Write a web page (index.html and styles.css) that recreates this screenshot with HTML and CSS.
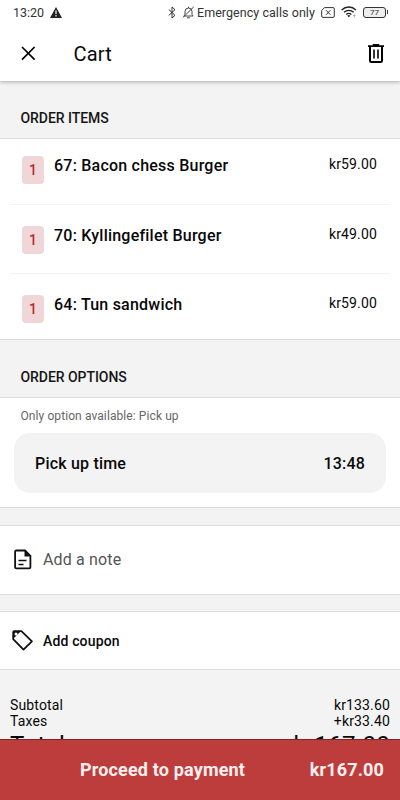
FILE: index.html
```html
<!DOCTYPE html>
<html lang="en">
<head>
<meta charset="utf-8">
<title>Cart</title>
<link rel="stylesheet" href="styles.css">
</head>
<body>
<div class="status">
  <span class="clock">13:20</span>
  <svg class="warn" width="12" height="11" viewBox="0 0 12 11"><path d="M6 0 12 11H0Z" fill="#222"/><path d="M6 3.5v3.6M6 8v1.4" stroke="#fff" stroke-width="1.2"/></svg>
  <svg class="bt" width="8" height="13" viewBox="0 0 8 13"><path d="M.8 3.6 7 9.3 4 12V1l3 2.7L.8 9.4" fill="none" stroke="#333"/></svg>
  <svg class="bell" width="13" height="13" viewBox="0 0 13 13" fill="none" stroke="#444"><path d="M2 10h9L10 8.500V5.500a3.500 3.500 0 0 0-7 0v3zM5 11.800h3M6.500 2V.8M.8 11.500 11.800.8"/></svg>
  <span class="carrier">Emergency calls only</span>
  <svg class="sim" width="14" height="11" viewBox="0 0 14 11" fill="none" stroke="#333"><path d="M3.500.6H12a1.300 1.300 0 0 1 1.300 1.300v7.200a1.300 1.300 0 0 1-1.300 1.300H2A1.300 1.300 0 0 1 .7 9.100V3.500zM5 3.200l4.400 4.600M9.400 3.200 5 7.800"/></svg>
  <svg class="wifi" width="16" height="12" viewBox="0 0 16 12" fill="none" stroke="#222" stroke-width="1.400"><path d="M.7 3.900a10.300 10.300 0 0 1 14.200 0M3 6.300a7 7 0 0 1 9.600 0M5.200 8.500a4 4 0 0 1 5.200 0"/><path d="m7.800 11.300-1.500-1.500a2.200 2.200 0 0 1 3 0z" fill="#222" stroke="none"/><path d="M12.200 9.500h2.200M13.300 8.400v3" stroke="#999" stroke-width=".8"/></svg>
  <span class="battery">77</span><span class="nub"></span>
</div>
<header class="bar">
  <svg class="close" width="15" height="15" viewBox="0 0 15 15"><path d="m1 1 12.600 12.600M13.600 1 1 13.600" stroke="#000" stroke-width="1.700"/></svg>
  <h1>Cart</h1>
  <svg class="trash" width="18" height="19" viewBox="0 0 18 19" fill="none" stroke="#000"><path d="M1 2.200h16M5.800 1h6.400" stroke-width="1.800"/><path d="M3 2.500v14.200q0 1.200 1.200 1.200h9.600q1.200 0 1.200-1.200V2.500" stroke-width="2"/><path d="M7 5.600v8.800M11 5.600v8.800" stroke-width="1.600"/></svg>
</header>
<main>
  <h2 class="items-title">ORDER ITEMS</h2>
  <section class="items">
    <div class="item"><span class="qty">1</span><span class="name">67: Bacon chess Burger</span><span class="price">kr59.00</span></div>
    <div class="item"><span class="qty">1</span><span class="name">70: Kyllingefilet Burger</span><span class="price">kr49.00</span></div>
    <div class="item"><span class="qty">1</span><span class="name">64: Tun sandwich</span><span class="price">kr59.00</span></div>
  </section>
  <h2 class="options-title">ORDER OPTIONS</h2>
  <section class="options">
    <p>Only option available: Pick up</p>
    <div class="pickup"><span>Pick up time</span><span class="time">13:48</span></div>
  </section>
  <section class="note">
    <svg width="18" height="21" viewBox="0 0 18 21"><path d="M2.300 1.500H11l5.400 5.400v11.300q0 1.200-1.200 1.200H2.300q-1.200 0-1.200-1.200V2.700q0-1.200 1.200-1.200z" fill="none" stroke="#111" stroke-width="1.800"/><path d="M10.500 1v6.400H17z" fill="#111"/><path d="M4.500 11.500h8M4.500 15.400h5" stroke="#111" stroke-width="1.500"/></svg>
    <span>Add a note</span>
  </section>
  <section class="coupon">
    <svg width="21" height="21" viewBox="0 0 21 21"><path d="M1.200 2.200v6.900l10.300 10.500 8.400-8.300L9.400 1.200H2.200q-1 0-1 1z" fill="none" stroke="#111" stroke-width="1.800" stroke-linejoin="round"/><path d="M1 1h8L1 9z" fill="#111"/><circle cx="4" cy="4" r="1.500" fill="#fff"/></svg>
    <span>Add coupon</span>
  </section>
  <section class="totals">
    <div><span>Subtotal</span><span>kr133.60</span></div>
    <div><span>Taxes</span><span>+kr33.40</span></div>
    <div class="total"><span>Total</span><span>kr167.00</span></div>
  </section>
</main>
<footer><span class="pay">Proceed to payment</span><span class="sum">kr167.00</span></footer>
</body>
</html>
```
FILE: styles.css
```css
* { box-sizing: border-box; margin: 0; padding: 0; }
body { width: 400px; height: 800px; overflow: hidden; display: flex; flex-direction: column; background: #f3f3f3; color: #080808; font-family: Roboto, "Liberation Sans", sans-serif; }
svg { display: block; flex: none; }
span, h1, h2, p { white-space: nowrap; }
.status { position: relative; z-index: 2; flex: none; height: 26px; padding: 0 0 2px 13px; display: flex; align-items: center; background: #fff; color: #333; }
.status span { flex: none; }
.clock { font-size: 12.500px; width: 37px; }
.bt { margin-left: 106px; }
.bell { margin-left: 6px; }
.carrier { font-size: 12.500px; margin-left: 2px; width: 118px; letter-spacing: .05px; }
.sim { margin-left: 6px; }
.wifi { margin-left: 6px; }
.battery { width: 23px; height: 11px; margin-left: 6px; border: 1px solid #333; border-radius: 3px; font-size: 8px; line-height: 9px; text-align: center; background: #eee; }
.nub { width: 1px; height: 4px; margin-left: 1px; background: #333; }
.bar { flex: none; height: 55px; padding: 0 15px 0 21px; display: flex; align-items: center; background: #fff; box-shadow: 0 1px 4px rgba(0,0,0,.3); z-index: 1; }
h1 { font-size: 20px; font-weight: 400; margin-left: 37.500px; flex: 1; letter-spacing: .2px; }
main { flex: 1; min-height: 0; overflow: hidden; }
h2 { font-size: 14px; font-weight: 500; line-height: 16px; padding-left: 20.500px; color: #151515; letter-spacing: -.05px; }
.items-title { height: 57px; padding-top: 29px; }
.options-title { height: 57px; padding-top: 29px; }
section { background: #fff; border-top: 1px solid #dedede; border-bottom: 1px solid #dedede; }
.items { height: 202px; padding: 0 10px; }
.item { height: 65px; display: flex; align-items: flex-start; padding: 17px 13px 0 12px; }
.item + .item { height: 69px; border-top: 1px solid #f2f2f2; padding-top: 20.500px; }
.qty { width: 22px; height: 28px; border-radius: 4px; background: #f1d6d8; color: #b92832; font-size: 14px; font-weight: 500; line-height: 28px; text-align: center; }
.name { font-size: 16px; font-weight: 500; line-height: 19px; margin-left: 10px; flex: 1; letter-spacing: .22px; }
.price { font-size: 14px; line-height: 17px; letter-spacing: .15px; }
.options { height: 111px; padding: 10px 14px 0; }
.options p { font-size: 12px; line-height: 16px; padding-left: 6.500px; color: #666; letter-spacing: .09px; }
.pickup { height: 60px; margin-top: 9px; border-radius: 16px; background: #f3f3f3; padding: 0 21px; display: flex; align-items: center; justify-content: space-between; font-size: 16px; font-weight: 500; letter-spacing: .2px; }
.note { height: 70px; margin-top: 17px; display: flex; align-items: center; padding: 0 0 2px 14px; font-size: 16px; color: #555; letter-spacing: .15px; }
.note span { margin-left: 11px; }
.coupon { height: 59px; margin-top: 16px; display: flex; align-items: center; padding-left: 12px; font-size: 14px; font-weight: 500; letter-spacing: .15px; }
.coupon span { margin-left: 10px; }
.totals { background: none; border: 0; padding: 27px 10px 0; font-size: 14px; line-height: 16px; letter-spacing: .15px; }
.totals div { display: flex; justify-content: space-between; }
.totals .total { font-size: 24px; line-height: 32px; letter-spacing: .3px; }
footer { flex: none; height: 61px; border-top: 1px solid #852427; background: #bd3d3d; color: #fff0ef; display: flex; align-items: center; padding: 0 16px 2px 80px; justify-content: space-between; font-size: 18px; font-weight: 700; letter-spacing: .16px; }
```
